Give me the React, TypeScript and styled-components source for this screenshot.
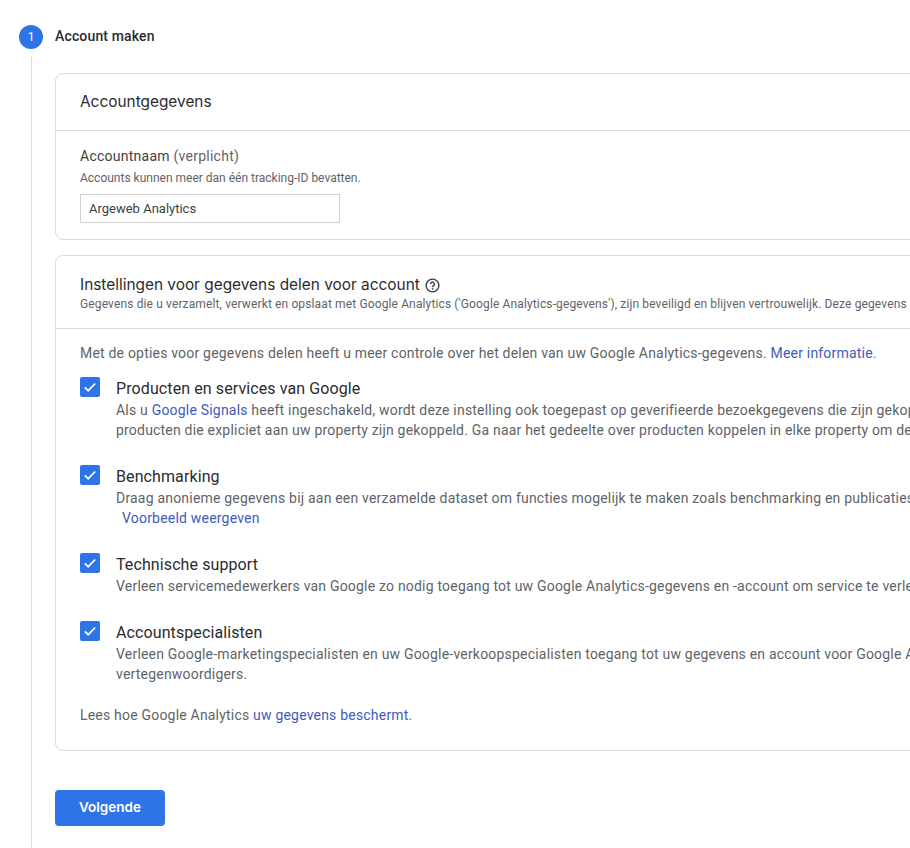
import styled, {createGlobalStyle} from "styled-components";

const GlobalStyle = createGlobalStyle`
  html, body {
    margin: 0;
    padding: 0;
    background: #fff;
    font-family: Roboto, "Liberation Sans", sans-serif;
    overflow: hidden;
  }
`

const App = () => {
    return (
        <Page>
            <GlobalStyle/>
            <StepHeader>
                <StepNumber>1</StepNumber>
                <StepTitle>Account maken</StepTitle>
            </StepHeader>
            <StepBody>
                <Card>
                    <CardHeader>
                        <CardTitle>Accountgegevens</CardTitle>
                    </CardHeader>
                    <AccountSection>
                        <FieldLabel>Accountnaam <Muted>(verplicht)</Muted></FieldLabel>
                        <FieldHint>Accounts kunnen meer dan één tracking-ID bevatten.</FieldHint>
                        <NameInput defaultValue="Argeweb Analytics"/>
                    </AccountSection>
                </Card>
                <SharingCard>
                    <SharingHeader>
                        <CardTitle>
                            Instellingen voor gegevens delen voor account
                            <HelpIcon viewBox="0 0 16 16">
                                <circle cx="8" cy="8" r="6.8" fill="none" stroke="#3c4043" strokeWidth="1.5"/>
                                <path d="M5.9 6.5a2.1 2.1 0 1 1 3.3 1.7c-.8.5-1.2.9-1.2 1.6" fill="none" stroke="#3c4043" strokeWidth="1.5"/>
                                <rect x="7.2" y="10.8" width="1.6" height="1.6" fill="#3c4043"/>
                            </HelpIcon>
                        </CardTitle>
                        <SharingHint>Gegevens die u verzamelt, verwerkt en opslaat met Google Analytics ('Google Analytics-gegevens'), zijn beveiligd en blijven vertrouwelijk. Deze gegevens</SharingHint>
                    </SharingHeader>
                    <SharingSection>
                        <BodyLine>Met de opties voor gegevens delen heeft u meer controle over het delen van uw Google Analytics-gegevens. <Link>Meer informatie</Link>.</BodyLine>
                        <OptionList>
                            {options.map(option => (
                                <Option key={option.title}>
                                    <CheckBox>
                                        <svg width="14" height="14" viewBox="0 0 14 14">
                                            <path d="M1.8 7.4l3.4 3.3 7-7.2" fill="none" stroke="#fff" strokeWidth="1.7"/>
                                        </svg>
                                    </CheckBox>
                                    <div>
                                        <OptionTitle>{option.title}</OptionTitle>
                                        {option.lines.map((line, i) => <BodyLine key={i}>{line}</BodyLine>)}
                                    </div>
                                </Option>
                            ))}
                        </OptionList>
                        <BodyLine>Lees hoe Google Analytics <Link>uw gegevens beschermt</Link>.</BodyLine>
                    </SharingSection>
                </SharingCard>
                <NextButton>Volgende</NextButton>
            </StepBody>
        </Page>
    );
};

const Page = styled.div`
  width: 910px;
  height: 848px;
  overflow: hidden;
  position: relative;
  background: #fff;
  box-sizing: border-box;
  padding-top: 25px;`

const StepHeader = styled.div`
  display: flex;
  align-items: center;
  gap: 12px;
  padding-left: 19px;
  height: 24px;`

const StepNumber = styled.div`
  width: 24px;
  height: 24px;
  border-radius: 50%;
  background: #2f74e6;
  color: #fff;
  font-size: 12px;
  display: flex;
  align-items: center;
  justify-content: center;`

const StepTitle = styled.div`
  font-size: 14px;
  font-weight: 500;
  letter-spacing: .15px;
  line-height: 22px;
  padding-bottom: 2px;
  color: #2a2c30;`

const StepBody = styled.div`
  margin: 8px 0 0 31px;
  padding: 16px 0 0 23px;
  border-left: 1px solid #dadce0;
  height: 791px;
  box-sizing: border-box;`

const Card = styled.div`
  width: 1100px;
  border: 1px solid #dadce0;
  border-radius: 8px;
  box-sizing: border-box;
  height: 167px;`

const SharingCard = styled(Card)`
  height: 496px;
  margin-top: 15px;`

const CardHeader = styled.div`
  height: 57px;
  padding: 0 24px 1px;
  border-bottom: 1px solid #dadce0;
  box-sizing: border-box;
  display: flex;
  align-items: center;`

const SharingHeader = styled.div`
  height: 73px;
  padding: 19px 24px 0;
  border-bottom: 1px solid #dadce0;
  box-sizing: border-box;`

const CardTitle = styled.div`
  font-family: Inter, Roboto, sans-serif;
  font-size: 15.4px;
  color: #2a2c30;
  display: flex;
  align-items: center;
  gap: 5px;
  line-height: 20px;
  white-space: nowrap;`

const HelpIcon = styled.svg`
  width: 15px;
  height: 15px;`

const AccountSection = styled.div`
  padding: 15px 24px;`

const FieldLabel = styled.div`
  font-size: 14px;
  line-height: 20px;
  letter-spacing: .25px;
  color: #3c4043;`

const Muted = styled.span`
  color: #5f6368;`

const FieldHint = styled.div`
  font-size: 12px;
  line-height: 16px;
  color: #5f6368;
  margin-top: 4px;
  white-space: nowrap;`

const SharingHint = styled(FieldHint)`
  letter-spacing: .13px;
  margin-top: 1px;`

const NameInput = styled.input`
  display: block;
  width: 260px;
  height: 29px;
  margin-top: 8px;
  padding: 0 8px;
  box-sizing: border-box;
  border: 1px solid #d0d0d0;
  font-family: Roboto, sans-serif;
  font-size: 13px;
  color: #3c4043;
  outline: none;`

const SharingSection = styled.div`
  padding: 14px 24px 0;`

const BodyLine = styled.div`
  font-size: 14px;
  line-height: 20px;
  letter-spacing: .2px;
  color: #5f6368;
  white-space: nowrap;`

const Link = styled.span`
  color: #3d5cbd;`

const IndentedLink = styled(Link)`
  margin-left: 6px;`

const OptionList = styled.div`
  display: flex;
  flex-direction: column;
  gap: 24px;
  margin: 13px 0 21px;`

const Option = styled.div`
  display: flex;
  gap: 16px;`

const CheckBox = styled.div`
  width: 20px;
  height: 20px;
  margin-top: 1px;
  flex-shrink: 0;
  border-radius: 2px;
  background: #2f74e6;
  display: flex;
  align-items: center;
  justify-content: center;`

const OptionTitle = styled.div`
  font-size: 16px;
  line-height: 23px;
  padding-top: 1px;
  letter-spacing: .1px;
  color: #2a2c30;`

const NextButton = styled.button`
  display: block;
  margin-top: 39px;
  width: 110px;
  height: 36px;
  padding: 0 0 2px;
  border: none;
  border-radius: 4px;
  background: #2f74e6;
  color: #fff;
  font-family: Inter, Roboto, sans-serif;
  font-size: 13.5px;
  font-weight: 600;`

const options = [
    {
        title: 'Producten en services van Google',
        lines: [
            <>Als u <Link>Google Signals</Link> heeft ingeschakeld, wordt deze instelling ook toegepast op geverifieerde bezoekgegevens die zijn gekoppeld</>,
            <>producten die expliciet aan uw property zijn gekoppeld. Ga naar het gedeelte over producten koppelen in elke property om de</>,
        ],
    },
    {
        title: 'Benchmarking',
        lines: [
            <>Draag anonieme gegevens bij aan een verzamelde dataset om functies mogelijk te maken zoals benchmarking en publicaties</>,
            <IndentedLink>Voorbeeld weergeven</IndentedLink>,
        ],
    },
    {
        title: 'Technische support',
        lines: [
            <>Verleen servicemedewerkers van Google zo nodig toegang tot uw Google Analytics-gegevens en -account om service te verlenen</>,
        ],
    },
    {
        title: 'Accountspecialisten',
        lines: [
            <>Verleen Google-marketingspecialisten en uw Google-verkoopspecialisten toegang tot uw gegevens en account voor Google Analytics</>,
            <>vertegenwoordigers.</>,
        ],
    },
]

export default App;
